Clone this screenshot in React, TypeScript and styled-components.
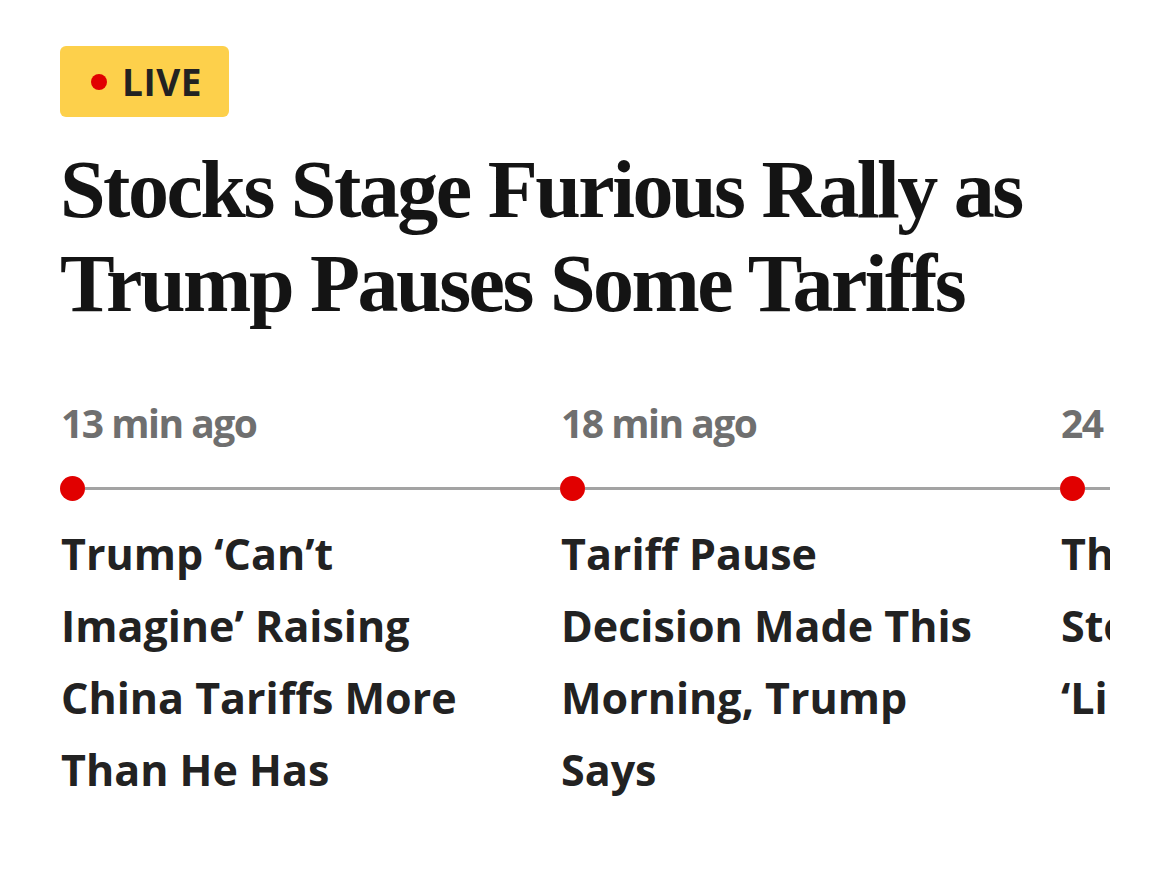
import React from 'react'
import styled, { createGlobalStyle } from 'styled-components'

const GlobalStyle = createGlobalStyle`
  html, body {
    margin: 0;
    padding: 0;
    background: #ffffff;
  }
  body {
    font-family: 'Open Sans', 'Liberation Sans', sans-serif;
    -webkit-font-smoothing: antialiased;
  }
`

interface Update {
  time: string
  title: string
}

const updates: Update[] = [
  { time: '13 min ago', title: 'Trump ‘Can’t Imagine’ Raising China Tariffs More Than He Has' },
  { time: '18 min ago', title: 'Tariff Pause Decision Made This Morning, Trump Says' },
  { time: '24 min ago', title: 'This Is the Biggest Stock Rally Since ‘Liberation Day’' },
]

export default function App() {
  return (
    <S.Page>
      <GlobalStyle />
      <S.Badge>
        <S.BadgeDot />
        LIVE
      </S.Badge>
      <S.Headline>
        Stocks Stage Furious Rally as
        <br />
        Trump Pauses Some Tariffs
      </S.Headline>
      <S.Timeline>
        {updates.map((u) => (
          <S.Column key={u.time}>
            <S.Time>{u.time}</S.Time>
            <S.Track>
              <S.Dot />
              <S.Line />
            </S.Track>
            <S.Title>{u.title}</S.Title>
          </S.Column>
        ))}
      </S.Timeline>
    </S.Page>
  )
}

const S = {
  Page: styled.div`
    display: flex;
    flex-direction: column;
    align-items: flex-start;
    padding: 46px 0 0 60px;
    width: 1110px;
    height: 882px;
    box-sizing: border-box;
    overflow: hidden;
  `,
  Badge: styled.div`
    display: flex;
    align-items: center;
    gap: 15px;
    width: 169px;
    height: 71px;
    box-sizing: border-box;
    padding-left: 31px;
    border-radius: 6px;
    background-color: #fdd04b;
    color: #222222;
    font-size: 37px;
    font-weight: 700;
    letter-spacing: 0.5px;
  `,
  BadgeDot: styled.span`
    width: 16px;
    height: 16px;
    border-radius: 50%;
    background-color: #e10000;
    flex-shrink: 0;
  `,
  Headline: styled.h1`
    margin: 26px 0 0;
    font-family: 'Liberation Serif', 'Times New Roman', serif;
    font-size: 82px;
    font-weight: 700;
    line-height: 94px;
    letter-spacing: -2.5px;
    color: #141414;
  `,
  Timeline: styled.div`
    display: flex;
    width: 1050px;
    margin-top: 63px;
    overflow: hidden;
  `,
  Column: styled.div`
    display: flex;
    flex-direction: column;
    flex: 0 0 500px;
  `,
  Time: styled.div`
    padding-left: 1px;
    font-size: 39px;
    font-weight: 700;
    letter-spacing: -1.5px;
    line-height: 58px;
    white-space: nowrap;
    color: #6f6f6f;
  `,
  Track: styled.div`
    display: flex;
    align-items: center;
    margin-top: 23px;
    height: 26px;
  `,
  Dot: styled.span`
    width: 25px;
    height: 25px;
    border-radius: 50%;
    background-color: #e10000;
    flex-shrink: 0;
  `,
  Line: styled.span`
    flex: 1;
    height: 3px;
    background-color: #a3a3a3;
  `,
  Title: styled.div`
    margin-top: 17px;
    padding-left: 1px;
    max-width: 425px;
    font-size: 43px;
    font-weight: 700;
    line-height: 72px;
    color: #222222;
  `,
}
